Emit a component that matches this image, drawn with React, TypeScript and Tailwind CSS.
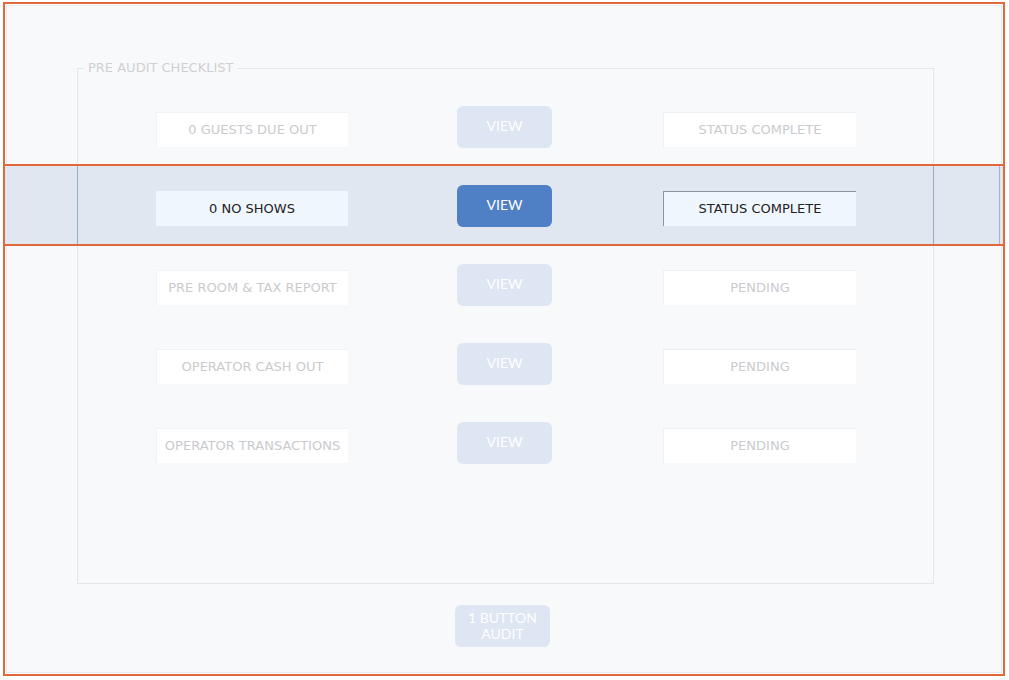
import React from 'react';

const rows = [
  { label: '0 GUESTS DUE OUT', status: 'STATUS COMPLETE', active: false },
  { label: '0 NO SHOWS', status: 'STATUS COMPLETE', active: true },
  { label: 'PRE ROOM & TAX REPORT', status: 'PENDING', active: false },
  { label: 'OPERATOR CASH OUT', status: 'PENDING', active: false },
  { label: 'OPERATOR TRANSACTIONS', status: 'PENDING', active: false },
];

const labelFont = "font-['DejaVu_Sans',sans-serif] text-[13px]";
const btnFont = "font-['Lato',sans-serif] text-[14px]";

function ChecklistRow({ label, status, active }: { label: string; status: string; active: boolean }) {
  return (
    <div className="relative h-[79px]">
      {active && (
        // selection band over the row
        <div className="absolute left-[-75px] top-0 w-[1002px] h-[82px] border-2 border-[#e2683b] bg-[#e1e7f1] flex">
          <div className="w-[72px] shrink-0" />
          <div className="w-[857px] shrink-0 h-full border-x border-[#97aac4]" />
          <div className="w-[65px] shrink-0" />
          <div className="w-px shrink-0 h-full bg-[#a3b4ca]" />
        </div>
      )}
      <div className="relative flex items-start pt-[21px] pl-[78px]">
        <div
          className={`w-[192px] h-[35px] mt-[6px] flex items-center justify-center ${labelFont} ${
            active ? 'bg-[#f0f6fe] text-[#222]' : 'bg-white text-[#cacbce] border-t border-l border-[#f1f2f5]'
          }`}
        >
          {label}
        </div>
        <button
          className={`ml-[109px] w-[95px] h-[42px] rounded-[6px] text-white pb-[3px] ${btnFont} ${
            active ? 'bg-[#4f80c6]' : 'bg-[#dde6f2]'
          }`}
        >
          VIEW
        </button>
        <div
          className={`ml-[111px] w-[193px] h-[35px] mt-[6px] flex items-center justify-center ${labelFont} ${
            active
              ? 'bg-[#f0f6fe] text-[#222] border-t border-l border-[#8d949e]'
              : 'bg-white text-[#cacbce] border-t border-l border-[#eef0f3]'
          }`}
        >
          {status}
        </div>
      </div>
    </div>
  );
}

export default function App() {
  return (
    <div className="w-[1009px] h-[680px] bg-white pt-[2px] pl-[3px]">
      <div className="w-[1002px] h-[674px] border-2 border-[#e2683b] p-px">
        <div className="h-full border border-[#e6e9ee] bg-[#f8f9fb] pt-[54px]">
          <fieldset className="ml-[70px] w-[857px] h-[524px] border border-[#e3e6eb]">
            <legend className={`ml-[6px] px-[4px] leading-4 text-[#cfd0d3] ${labelFont}`}>
              PRE AUDIT CHECKLIST
            </legend>
            <div className="pt-[9px]">
              {rows.map((r) => (
                <ChecklistRow key={r.label} {...r} />
              ))}
            </div>
          </fieldset>
          <button
            className={`mt-[21px] ml-[448px] w-[95px] h-[42px] rounded-[6px] bg-[#dde6f2] text-white leading-4 flex flex-col items-center justify-center ${btnFont}`}
          >
            <span>1 BUTTON</span>
            <span>AUDIT</span>
          </button>
        </div>
      </div>
    </div>
  );
}
